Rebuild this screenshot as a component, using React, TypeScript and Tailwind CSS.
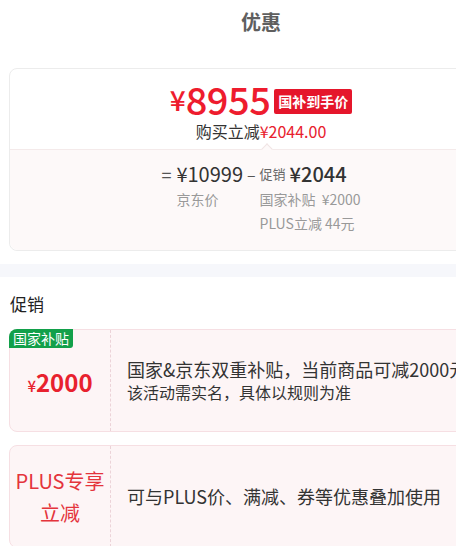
import React from "react";

const font = { fontFamily: '"Noto Sans CJK SC", "Noto Sans", sans-serif' };

const PromoCard = ({
  left,
  children,
  tag,
}: {
  left: React.ReactNode;
  children: React.ReactNode;
  tag?: string;
}) => (
  <div className="relative mx-[9px] flex h-[103px] rounded-lg border border-[#f6dfe3] bg-[#fdf5f6]">
    {tag && (
      <div className="absolute -left-px -top-px rounded-tl-lg rounded-br-[3px] bg-[#12a04a] px-[4px] text-[14px] leading-[19px] text-white">
        {tag}
      </div>
    )}
    <div className="flex w-[101px] shrink-0 items-center justify-center border-r border-dashed border-[#ecd3d8]">
      {left}
    </div>
    <div className="flex flex-1 items-center pl-[16px] text-[#333]">{children}</div>
  </div>
);

export default function App() {
  return (
    <div className="h-[546px] w-[456px] overflow-hidden bg-white" style={font}>
      <div className="w-[522px]">
        <div className="flex h-[44px] items-center justify-center text-[20px] font-bold text-[#5f5f5f]">
          优惠
        </div>

        <div className="mx-[9px] mt-[24px] rounded-lg border border-[#ececec]">
          <div className="pb-[7px] pt-[9px] text-center">
            <div className="flex h-[42px] items-center justify-center">
              <span className="text-[28px] font-medium leading-[40px] text-[#ee1c2e]">¥</span>
              <span className="text-[38px] font-medium leading-[40px] tracking-[-0.5px] text-[#ee1c2e]">
                8955
              </span>
              <span className="ml-[4px] mt-[4px] rounded-[2px] bg-[#e5162b] px-[4px] text-[14px] font-bold leading-[25px] text-white">
                国补到手价
              </span>
            </div>
            <div className="text-[16px] leading-[22px] text-[#333]">
              购买立减<span className="text-[#e8212e]">¥2044.00</span>
            </div>
          </div>

          <div className="relative rounded-b-lg border-t border-[#f4eaea] bg-[#fdf9f9] pb-[15px] pt-[11px]">
            <div className="absolute left-[253px] top-[-5px] h-[8px] w-[8px] rotate-45 border-l border-t border-[#f0e4e4] bg-[#fdf9f9]" />
            <div className="flex justify-center text-[#333]">
              <div>
                <div className="flex h-[26px] items-center text-[20px]">
                  <span className="mr-[5px] text-[18px] text-[#555]">=</span>
                  <span>¥10999</span>
                  <span className="mx-[4px] text-[16px] text-[#555]">–</span>
                </div>
                <div className="pl-[15px] text-[14px] leading-[24px] text-[#999]">京东价</div>
              </div>
              <div>
                <div className="flex h-[26px] items-center">
                  <span className="mr-[4px] text-[13px] text-[#666]">促销</span>
                  <span className="text-[20px] font-medium">¥2044</span>
                </div>
                <div className="text-[14px] leading-[24px] text-[#999]">
                  国家补贴 <span className="ml-[3px]">¥2000</span>
                </div>
                <div className="text-[14px] leading-[24px] text-[#999]">PLUS立减 44元</div>
              </div>
            </div>
          </div>
        </div>

        <div className="mt-[13px] h-[13px] bg-[#f6f7fb]" />

        <div className="px-[10px] pb-[14px] pt-[16px] text-[17px] leading-[22px] text-[#222]">
          促销
        </div>

        <PromoCard
          tag="国家补贴"
          left={
            <div className="mt-[2px] flex items-baseline text-[#e8212e]">
              <span className="text-[15px] font-medium">¥</span>
              <span className="text-[24px] font-semibold">2000</span>
            </div>
          }
        >
          <div>
            <div className="whitespace-nowrap text-[18px] leading-[23px]">
              国家&京东双重补贴，当前商品可减2000元
            </div>
            <div className="text-[16px] leading-[22px]">该活动需实名，具体以规则为准</div>
          </div>
        </PromoCard>

        <div className="h-[13px]" />

        <PromoCard
          left={
            <div className="text-center text-[20px] leading-[32px] text-[#e4343c]">
              PLUS专享
              <br />
              立减
            </div>
          }
        >
          <div className="text-[18px]">可与PLUS价、满减、券等优惠叠加使用</div>
        </PromoCard>
      </div>
    </div>
  );
}
